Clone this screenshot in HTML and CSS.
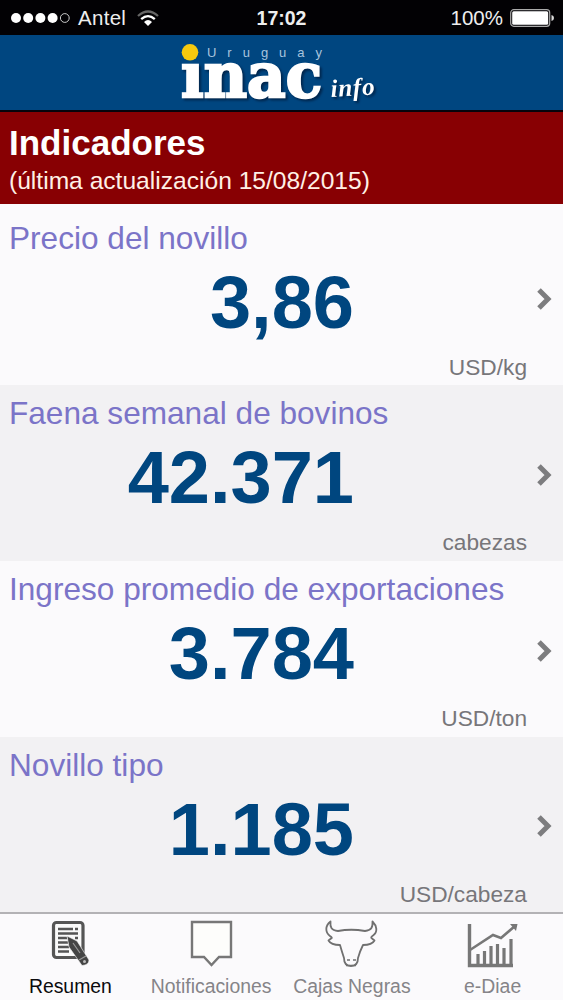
FILE: index.html
```html
<!DOCTYPE html>
<html lang="es">
<head>
<meta charset="utf-8">
<title>INAC info</title>
<link rel="stylesheet" href="styles.css">
</head>
<body>
<div class="status">
  <div class="carrier">
    <svg class="signal" width="61" height="14" viewBox="0 0 61 14"><g fill="#fff"><circle cx="6" cy="7" r="5"/><circle cx="18.2" cy="7" r="5"/><circle cx="30.4" cy="7" r="5"/><circle cx="42.6" cy="7" r="5"/></g><circle cx="54.8" cy="7" r="4.4" fill="none" stroke="#ccc"/></svg>
    <span class="carrier-name">Antel</span>
    <svg class="wifi" width="22" height="17" viewBox="0 0 22 17"><g fill="none" stroke-width="2.3"><path d="M1 6Q11-3 21 6" stroke="#666"/><path d="M4.2 9.2Q11 3 17.800 9.200" stroke="#fff"/></g><path d="M7 12Q11 8.200 15 12L11 16Z" fill="#fff"/></svg>
  </div>
  <div class="clock">17:02</div>
  <div class="power"><span>100%</span>
    <svg width="45" height="18" viewBox="0 0 45 18"><rect x=".7" y=".7" width="39" height="16.6" rx="3" fill="none" stroke="#aaa" stroke-width="1.2"/><rect x="2.2" y="2.2" width="36" height="13.6" rx="1.5" fill="#fff"/><path d="M41.5 6Q44 6.5 44 9T41.5 12Z" fill="#ddd"/></svg>
  </div>
</div>
<header class="brand">
  <svg class="logo" width="210" height="74" viewBox="175 36 210 74">
    <g class="logo-shadow">
      <text class="logo-main" x="181" y="97" textLength="141" lengthAdjust="spacingAndGlyphs">ınac</text>
      <text class="logo-info" x="331" y="97" textLength="44" transform="rotate(-3 331 97)">info</text>
    </g>
    <circle cx="190" cy="52.3" r="8.3" fill="#f6c90e"/>
    <text class="logo-country" x="207" y="57" textLength="115">Uruguay</text>
  </svg>
</header>
<section class="heading">
  <h1>Indicadores</h1>
  <p>(última actualización 15/08/2015)</p>
</section>
<main class="list">
  <article class="row first">
    <h2>Precio del novillo</h2>
    <div class="value">3,86</div>
    <div class="unit">USD/kg</div>
    <svg class="chevron" width="16" height="22" viewBox="0 0 16 22"><path d="M3 2L12 11L3 20"/></svg>
  </article>
  <article class="row alt">
    <h2>Faena semanal de bovinos</h2>
    <div class="value">42.371</div>
    <div class="unit">cabezas</div>
    <svg class="chevron" width="16" height="22" viewBox="0 0 16 22"><path d="M3 2L12 11L3 20"/></svg>
  </article>
  <article class="row">
    <h2>Ingreso promedio de exportaciones</h2>
    <div class="value">3.784</div>
    <div class="unit">USD/ton</div>
    <svg class="chevron" width="16" height="22" viewBox="0 0 16 22"><path d="M3 2L12 11L3 20"/></svg>
  </article>
  <article class="row alt last">
    <h2>Novillo tipo</h2>
    <div class="value">1.185</div>
    <div class="unit">USD/cabeza</div>
    <svg class="chevron" width="16" height="22" viewBox="0 0 16 22"><path d="M3 2L12 11L3 20"/></svg>
  </article>
</main>
<nav class="tabs">
  <a class="tab active">
    <svg width="52" height="48" viewBox="0 0 52 48"><rect x="9.500" y="2.500" width="29.500" height="35" rx="3" fill="#fafafa" stroke="#555" stroke-width="3.200"/><g stroke="#555" stroke-width="2.500"><path d="M14 9H29M31 9H34M14 13.500H34M14 18H23M31 18H34M14 22.500H24M14 27H25M14 31.500H25"/></g><path d="M23 16L33 21L45 40Q45 45 38 45.500L25 27Z" fill="#444" stroke="#fafafa" stroke-width=".6"/><path d="M29 23L36 33M35 40L42 36" stroke="#999" stroke-width="1.200"/><circle cx="40.500" cy="41.500" r="1.500" fill="#bbb"/></svg>
    <span>Resumen</span>
  </a>
  <a class="tab">
    <svg width="52" height="48" viewBox="0 0 52 48"><path d="M7 2H46V37H34L26.500 45L19 37H7Z" fill="#fdfdfb" stroke="#777" stroke-width="2.400"/></svg>
    <span>Notificaciones</span>
  </a>
  <a class="tab">
    <svg width="60" height="48" viewBox="0 0 60 48"><g fill="none" stroke="#707070" stroke-width="1.800" stroke-linejoin="round"><path d="M8.500 1.500C3 6 3 12 8 16Q11 18 9 18.500L6.500 20.500Q9 25 18 25Q20 32 22 38Q22 46 29 46Q36 46 36 38Q38 31 41 25Q50 25 52.500 20.500L50 18.500Q48 17.500 51 15.500C56 12 55 6 50.500 1.500C51 8 49 10 43 11Q29 8.500 16 11C9 10 8 7 8.500 1.500Z"/></g><path d="M25 40H28M31 40H34M24 45.500H34" stroke="#707070" stroke-width="1.700"/></svg>
    <span>Cajas Negras</span>
  </a>
  <a class="tab">
    <svg width="52" height="48" viewBox="0 0 52 48"><g fill="none" stroke="#777"><path d="M2.500 4V45.500H46" stroke-width="3.400"/><path d="M3 30L26 15L34 18L48 6" stroke-width="2.600"/><path d="M11 34V45M17.500 31V45M24 26V45M30.500 24V45M37 28V45M44 19V46" stroke-width="3.200"/></g><path d="M43 4H50.500L49 11Z" fill="#777"/></svg>
    <span>e-Diae</span>
  </a>
</nav>
</body>
</html>
```
FILE: styles.css
```css
* { box-sizing: border-box; }
body {
  margin: 0;
  width: 563px;
  height: 1000px;
  overflow: hidden;
  display: flex;
  flex-direction: column;
  font-family: "Liberation Sans", Arial, sans-serif;
  background: #fbfafc;
}
h1, h2, p { margin: 0; font-weight: normal; }
svg { display: block; }

.status {
  flex: none;
  height: 35px;
  background: #020104;
  color: #eee;
  display: grid;
  grid-template-columns: 1fr 60px 1fr;
  align-items: center;
  font-size: 20.5px;
  line-height: 36px;
}
.carrier { display: flex; align-items: center; padding-left: 10px; }
.carrier-name { margin-left: 7px; letter-spacing: .3px; }
.wifi { margin-left: 11px; }
.clock { text-align: center; font-weight: bold; font-size: 19.5px; }
.power { display: flex; align-items: center; justify-content: flex-end; gap: 7px; padding-right: 8px; }

.brand {
  flex: none;
  height: 77px;
  padding: 1px 0 0 175px;
  background: #004680;
  border-bottom: 2px solid #07040c;
}
.logo { overflow: visible; }
.logo-shadow { filter: drop-shadow(2px 2px 1px #00264d); fill: #fff; }
.logo-main { font: bold 61px "DejaVu Serif", serif; stroke: #fff; stroke-width: 2.4px; }
.logo-info { font: italic bold 25px "Liberation Serif", serif; }
.logo-country { font: 13px "Liberation Sans", sans-serif; fill: #a9c4de; }

.heading {
  flex: none;
  height: 92px;
  padding: 11px 9px 0;
  background: #880003;
  color: #fff;
}
.heading h1 { font-size: 35px; font-weight: bold; line-height: 40px; }
.heading p { font-size: 24.6px; line-height: 36px; color: #fff0e6; }

.list { flex: none; }
.row {
  position: relative;
  height: 176px;
  padding: 10px 36px 0 9px;
  background: #fbfafc;
}
.row.first { height: 181px; padding-top: 16px; }
.row.alt { background: #f2f1f3; }
.row.last { height: 175px; }
.row h2 { font-size: 31.6px; line-height: 36px; color: #7b74c8; white-space: nowrap; }
.value {
  margin: 7px 0 10px;
  padding-right: 173px;
  text-align: right;
  font-size: 74px;
  font-weight: bold;
  line-height: 80px;
  color: #00467f;
}
.unit { text-align: right; font-size: 22.7px; line-height: 28px; color: #77767a; }
.chevron { position: absolute; right: 11px; bottom: 75px; }
.chevron path { fill: none; stroke: #7d7d7f; stroke-width: 5; }

.tabs {
  flex: 1;
  display: grid;
  grid-template-columns: repeat(4, 1fr);
  border-top: 2px solid #b3b2b5;
  background: #fbfafc;
}
.tab {
  display: flex;
  flex-direction: column;
  align-items: center;
  padding-top: 6px;
  color: #858488;
  font-size: 19.4px;
  line-height: 26px;
  white-space: nowrap;
}
.tab span { margin-top: 5px; }
.tab.active { color: #0b0b0d; }
```
